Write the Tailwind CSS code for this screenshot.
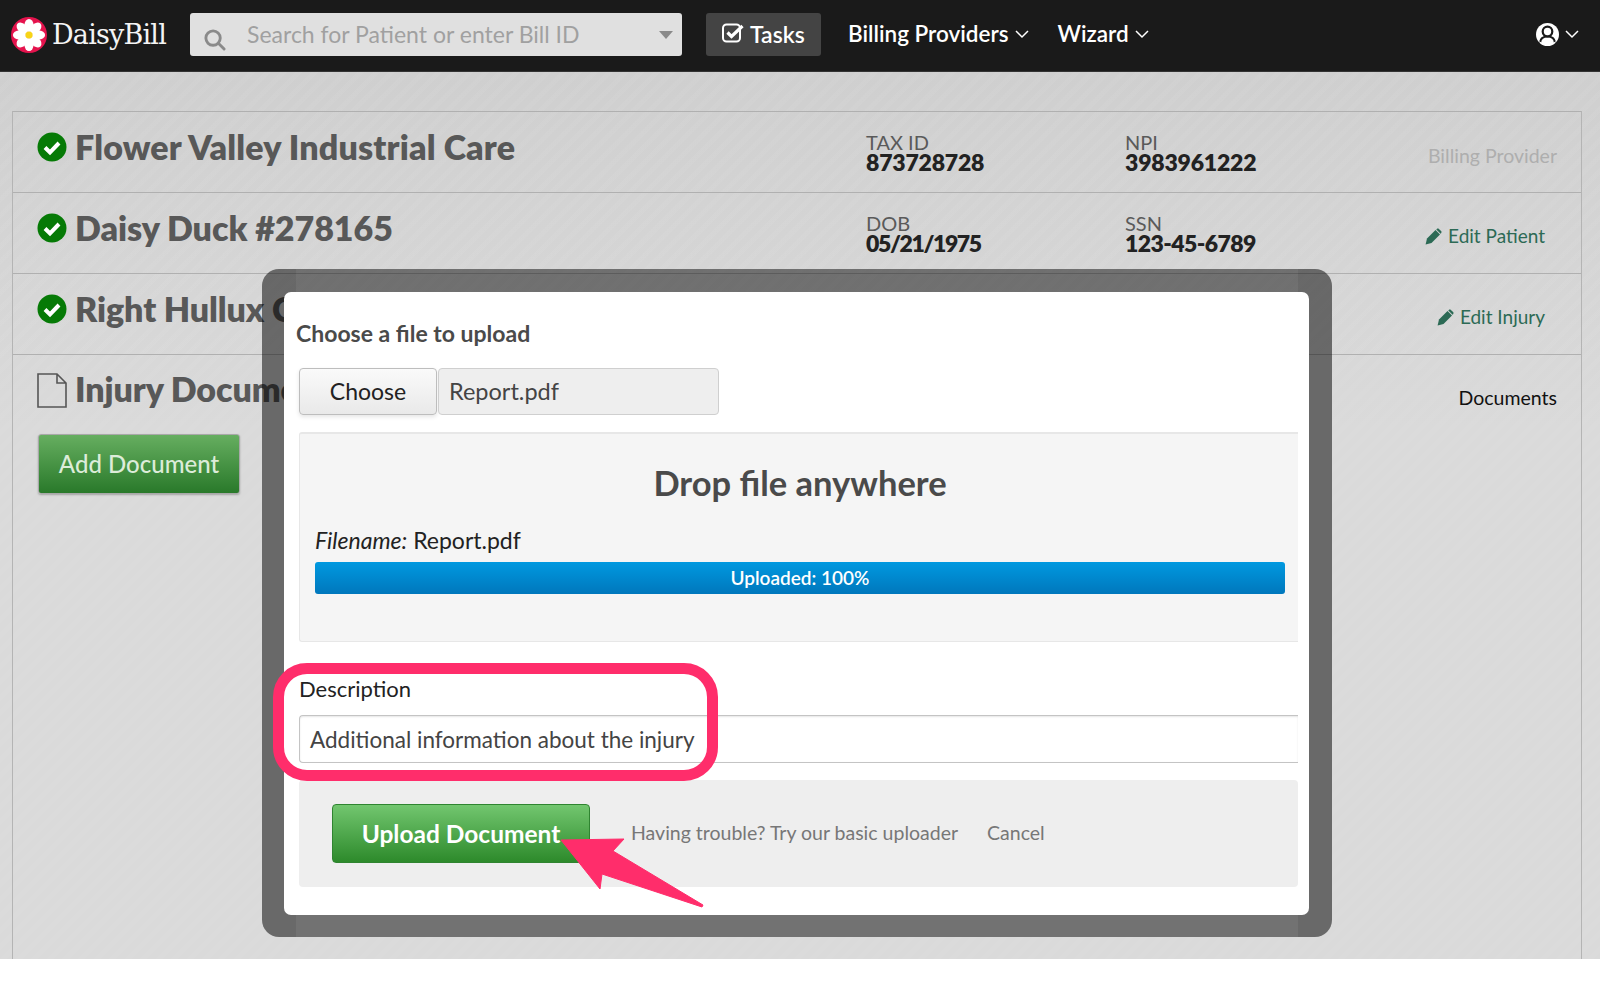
<!DOCTYPE html>
<html lang="en">
<head>
<meta charset="utf-8">
<title>DaisyBill</title>
<script src="https://cdn.jsdelivr.net/npm/@tailwindcss/browser@4"></script>
</head>
<body class="bg-white font-[family-name:Lato,sans-serif]">
<div class="relative w-[1600px] h-[992px] overflow-hidden bg-white">
  <!-- Nav -->
  <nav class="h-[72px] bg-[#1a1a1a] border-b border-[#333] flex items-center text-white pb-[2px]">
    <svg class="ml-[11px] w-[36px] h-[36px] shrink-0" viewBox="0 0 36 36">
      <circle cx="18" cy="18" r="18" fill="#e5134d"/>
      <g fill="#fff">
        <ellipse cx="18" cy="8.5" rx="4.6" ry="6.6"/>
        <ellipse cx="18" cy="8.5" rx="4.6" ry="6.6" transform="rotate(45 18 18)"/>
        <ellipse cx="18" cy="8.5" rx="4.6" ry="6.6" transform="rotate(90 18 18)"/>
        <ellipse cx="18" cy="8.5" rx="4.6" ry="6.6" transform="rotate(135 18 18)"/>
        <ellipse cx="18" cy="8.5" rx="4.6" ry="6.6" transform="rotate(180 18 18)"/>
        <ellipse cx="18" cy="8.5" rx="4.6" ry="6.6" transform="rotate(225 18 18)"/>
        <ellipse cx="18" cy="8.5" rx="4.6" ry="6.6" transform="rotate(270 18 18)"/>
        <ellipse cx="18" cy="8.5" rx="4.6" ry="6.6" transform="rotate(315 18 18)"/>
      </g>
      <circle cx="18" cy="18" r="3.6" fill="#f7d417"/>
    </svg>
    <span class="ml-[5px] w-[138px] text-[27px] leading-none font-[family-name:'DejaVu_Serif',serif] tracking-[-0.8px] text-[#f4f4f4]">DaisyBill</span>
    <div class="relative w-[492px] h-[43px] rounded-[3px] bg-[#e0e0e0] flex items-center">
      <svg class="absolute left-[13px] top-[15px] w-[23px] h-[23px]" viewBox="0 0 24 24" fill="none" stroke="#8a8a8a" stroke-width="3" stroke-linecap="round"><circle cx="10.5" cy="10.5" r="7.5"/><path d="M16 16l6 6"/></svg>
      <span class="ml-[57px] -mt-[1px] text-[23px] text-[#a0a0a0] leading-none">Search for Patient or enter Bill ID</span>
      <span class="absolute right-[9px] top-[18px] w-0 h-0 border-x-[7px] border-x-transparent border-t-[8px] border-t-[#8a8a8a]"></span>
    </div>
    <div class="ml-[24px] w-[115px] h-[43px] rounded-[3px] bg-[#444] flex items-center pl-[16px] gap-[5px]">
      <svg class="w-[23px] h-[20px] -mt-[3px]" viewBox="0 0 23 20" fill="none" stroke="#fff"><rect x="1" y="1.500" width="17" height="17" rx="3.500" stroke-width="2"/><path d="M5.500 9.500l4 4L20.500 3" stroke-width="3.200"/></svg>
      <span class="text-[23px] font-semibold leading-none">Tasks</span>
    </div>
    <span class="ml-[27px] text-[22.500px] font-semibold leading-none whitespace-nowrap">Billing Providers</span>
    <svg class="ml-[6px] w-[14px] h-[9px]" viewBox="0 0 14 9" fill="none" stroke="#fff" stroke-width="1.5"><path d="M1 1l6 6 6-6"/></svg>
    <span class="ml-[29px] text-[22.500px] font-semibold leading-none">Wizard</span>
    <svg class="ml-[6px] w-[14px] h-[9px]" viewBox="0 0 14 9" fill="none" stroke="#fff" stroke-width="1.5"><path d="M1 1l6 6 6-6"/></svg>
    <svg class="ml-auto w-[23px] h-[23px]" viewBox="0 0 23 23"><circle cx="11.500" cy="11.500" r="11.500" fill="#fff"/><path d="M4 19.500c.5-4 3.500-6 7.500-6s7 2 7.500 6" fill="#fff" stroke="#1a1a1a" stroke-width="2.200"/><path d="M3.500 18.500c2 2.500 4.800 3.300 8 3.300s6-.8 8-3.300" fill="none" stroke="#fff" stroke-width="1"/><circle cx="11.500" cy="8.500" r="4.800" fill="#fff" stroke="#1a1a1a" stroke-width="2.200"/></svg>
    <svg class="ml-[6px] mr-[21px] w-[14px] h-[9px]" viewBox="0 0 14 9" fill="none" stroke="#fff" stroke-width="1.5"><path d="M1 1l6 6 6-6"/></svg>
  </nav>

  <!-- Page -->
  <main class="h-[887px] pt-[39px] pl-[12px] pr-[18px] bg-[repeating-linear-gradient(135deg,rgba(255,255,255,0.04)_0_5px,rgba(255,255,255,0)_5px_11px),linear-gradient(180deg,#cfcfcf,#dadada_40%,#dadada)]">
    <section class="h-[848px] border-x border-[#b4b4b4]">
      <div class="h-[81px] border-t border-[#b0b0b0] flex">
        <div class="w-[829px] ml-[24px] pt-[19px] flex items-start gap-[8px]">
          <svg class="w-[30px] h-[30px] mt-[1px] shrink-0" viewBox="0 0 30 30"><circle cx="15" cy="15" r="14.500" fill="#067a06"/><path d="M8 15.500l5 5 9-9.500" fill="none" stroke="#fff" stroke-width="4"/></svg>
          <h2 class="-mt-[2px] text-[34px] leading-[36px] font-extrabold text-[#585858] whitespace-nowrap tracking-[0.15px]">Flower Valley Industrial Care</h2>
        </div>
        <div class="w-[259px] pt-[20px]">
          <div class="text-[20px] leading-[20px] text-[#5a5a5a]">TAX ID</div>
          <div class="-mt-[1px] text-[23px] leading-[22px] font-extrabold text-[#222] tracking-[-0.2px]">873728728</div>
        </div>
        <div class="w-[200px] pt-[20px]">
          <div class="text-[20px] leading-[20px] text-[#5a5a5a]">NPI</div>
          <div class="-mt-[1px] text-[23px] leading-[22px] font-extrabold text-[#222] tracking-[-0.2px]">3983961222</div>
        </div>
        <div class="flex-1 pr-[24px] pt-[32px] text-right text-[19.500px] leading-[24px] text-[#aeaeae] whitespace-nowrap">Billing Provider</div>
      </div>
      <div class="h-[81px] border-t border-[#b0b0b0] flex">
        <div class="w-[829px] ml-[24px] pt-[19px] flex items-start gap-[8px]">
          <svg class="w-[30px] h-[30px] mt-[1px] shrink-0" viewBox="0 0 30 30"><circle cx="15" cy="15" r="14.500" fill="#067a06"/><path d="M8 15.500l5 5 9-9.500" fill="none" stroke="#fff" stroke-width="4"/></svg>
          <h2 class="-mt-[2px] text-[34px] leading-[36px] font-extrabold text-[#585858] whitespace-nowrap tracking-[-0.05px]">Daisy Duck #278165</h2>
        </div>
        <div class="w-[259px] pt-[20px]">
          <div class="text-[20px] leading-[20px] text-[#5a5a5a]">DOB</div>
          <div class="-mt-[1px] text-[23px] leading-[22px] font-extrabold text-[#222] tracking-[-1.400px]">05/21/1975</div>
        </div>
        <div class="w-[200px] pt-[20px]">
          <div class="text-[20px] leading-[20px] text-[#5a5a5a]">SSN</div>
          <div class="-mt-[1px] text-[23px] leading-[22px] font-extrabold text-[#222] tracking-[-0.6px]">123-45-6789</div>
        </div>
        <div class="flex-1 pr-[36px] pt-[31px] flex justify-end items-start gap-[6px] text-[19px] leading-[24px] text-[#2c6a55] whitespace-nowrap">
          <svg class="w-[17px] h-[17px] mt-[4px]" viewBox="0 0 17 17" fill="#2c6a55"><path d="M2 10.500L10.500 2l4.500 4.500L6.500 15 .6 16.400z"/><path d="M11.800.9c.6-.6 1.500-.6 2.100 0l2.200 2.200c.6.600.6 1.500 0 2.100l-.5.500-4.300-4.300z"/></svg>Edit Patient
        </div>
      </div>
      <div class="h-[81px] border-t border-[#b0b0b0] flex">
        <div class="w-[829px] ml-[24px] pt-[19px] flex items-start gap-[8px]">
          <svg class="w-[30px] h-[30px] mt-[1px] shrink-0" viewBox="0 0 30 30"><circle cx="15" cy="15" r="14.500" fill="#067a06"/><path d="M8 15.500l5 5 9-9.500" fill="none" stroke="#fff" stroke-width="4"/></svg>
          <h2 class="-mt-[2px] text-[34px] leading-[36px] font-extrabold text-[#585858] whitespace-nowrap tracking-[-0.1px]">Right Hullux Care</h2>
        </div>
        <div class="flex-1 pr-[36px] pt-[31px] flex justify-end items-start gap-[6px] text-[19px] leading-[24px] text-[#2c6a55] whitespace-nowrap">
          <svg class="w-[17px] h-[17px] mt-[4px]" viewBox="0 0 17 17" fill="#2c6a55"><path d="M2 10.500L10.500 2l4.500 4.500L6.500 15 .6 16.400z"/><path d="M11.800.9c.6-.6 1.500-.6 2.100 0l2.200 2.200c.6.600.6 1.500 0 2.100l-.5.500-4.300-4.300z"/></svg>Edit Injury
        </div>
      </div>
      <div class="border-t border-[#b0b0b0] relative">
        <div class="flex">
          <div class="w-[829px] ml-[24px] pt-[18px] flex items-start gap-[8px]">
            <svg class="w-[30px] h-[35px] shrink-0" viewBox="0 0 30 35" fill="none" stroke="#555" stroke-width="1.600"><path d="M1 1h19l9 9v24H1zM20 1v9h9"/></svg>
            <h2 class="-mt-[2px] text-[34px] leading-[36px] font-extrabold text-[#585858] whitespace-nowrap tracking-[-0.1px]">Injury Documents</h2>
          </div>
          <div class="flex-1 pr-[24px] pt-[31px] text-right text-[19.500px] leading-[24px] text-[#111] whitespace-nowrap">Documents</div>
        </div>
        <button class="ml-[25px] mt-[24px] w-[202px] h-[60px] rounded-[3px] border border-[#a8a8a8] bg-[linear-gradient(180deg,#66ae60,#29792a)] text-[#dcecd9] text-[24px] font-medium shadow-[0_1px_2px_rgba(0,0,0,0.25)]">Add Document</button>
      </div>
    </section>
  </main>

  <!-- Modal -->
  <div class="absolute left-[262px] top-[269px] w-[1070px] h-[668px] rounded-[17px] overflow-hidden bg-black/48">
    <div class="absolute inset-y-0 left-0 w-[34px] bg-black/7"></div>
    <div class="absolute inset-y-0 right-0 w-[34px] bg-black/7"></div>
    <div class="absolute left-[22px] top-[23px] w-[1025px] h-[623px] rounded-[7px] bg-white pl-[12px] pr-[11px] pt-[28px]">
      <h3 class="text-[23px] leading-[26px] font-bold text-[#4a4a4a]">Choose a file to upload</h3>
      <div class="mt-[22px] ml-[3px] flex h-[47px]">
        <div class="w-[138px] rounded-[4px] border border-[#bdbdbd] bg-[linear-gradient(180deg,#fafafa,#e9e9e9)] flex items-center justify-center text-[23px] text-[#222] shadow-[0_2px_4px_rgba(0,0,0,0.1)]">Choose</div>
        <div class="ml-[1px] w-[281px] rounded-[4px] border border-[#cfcfcf] bg-[#eeeeee] flex items-center pl-[10px] text-[23.500px] text-[#444]">Report.pdf</div>
      </div>
      <div class="mt-[17px] ml-[3px] h-[210px] border-t-2 border-b border-l border-[#e7e7e7] rounded-l-[3px] bg-[#f5f5f5] pl-[15px] pr-[13px] pt-[27px]">
        <div class="text-center text-[34.500px] leading-[44px] font-bold text-[#4a4a4a]">Drop file anywhere</div>
        <div class="mt-[21px] text-[23px] leading-[28px] text-[#222]"><i>Filename:</i> Report.pdf</div>
        <div class="mt-[8px] h-[32px] rounded-[3px] bg-[linear-gradient(180deg,#0099e0,#0077bc)] flex items-center justify-center text-[19px] font-semibold text-white">Uploaded: 100%</div>
      </div>
      <div class="mt-[33px] ml-[3px] text-[22px] leading-[28px] text-[#222]">Description</div>
      <div class="mt-[12px] ml-[3px] h-[48px] rounded-l-[4px] border border-r-0 border-[#c4c4c4] flex items-center pl-[10px] pt-[1px] text-[22.500px] text-[#444] shadow-[inset_0_1px_2px_rgba(0,0,0,0.1)]">Additional information about the injury</div>
      <div class="mt-[17px] ml-[3px] h-[107px] rounded-[4px] bg-[#eeeeee] flex items-start pl-[33px] pt-[24px] text-[#777] text-[19.500px]">
        <button class="w-[258px] h-[59px] rounded-[4px] border border-[#2f8430] bg-[linear-gradient(180deg,#72c66f,#2d8a2b)] text-white text-[24.500px] font-bold pt-[2px]">Upload Document</button>
        <span class="ml-[41px] mt-[17px] leading-[24px]">Having trouble? Try our basic uploader</span>
        <span class="ml-[29px] mt-[17px] leading-[24px]">Cancel</span>
      </div>
    </div>
  </div>

  <!-- Annotation -->
  <div class="absolute left-[273px] top-[663px] w-[445px] h-[118px] rounded-[34px] border-[11px] border-[#ff2d6b]"></div>
  <svg class="absolute left-[555px] top-[834px] w-[155px] h-[80px]" viewBox="0 0 155 80"><path d="M6 6L69 5 58 17 148 71 147 73 47 40 45 55z" fill="#ff2d6b" stroke="#ff2d6b" stroke-linejoin="round"/></svg>
</div>
</body>
</html>
